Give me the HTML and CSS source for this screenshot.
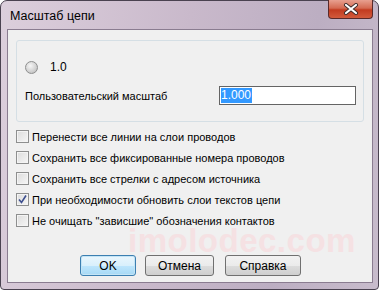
FILE: index.html
```html
<!DOCTYPE html>
<html lang="ru">

<head>
    <meta charset="UTF-8">
    <meta name="viewport" content="width=device-width, initial-scale=1.0">
    <title>Масштаб цепи</title>
    <link rel="stylesheet" href="styles.css">
</head>

<body>
    <div class="window">
        <div class="titlebar">
            <span class="title">Масштаб цепи</span>
            <span class="close">
                <svg width="16" height="12" viewBox="0 0 16 12">
                    <path d="M3 2 L13 10 M13 2 L3 10" stroke="#3a2a2a" stroke-width="4" stroke-linecap="round" />
                    <path d="M3 2 L13 10 M13 2 L3 10" stroke="#ffffff" stroke-width="2.2" stroke-linecap="round" />
                </svg>
            </span>
        </div>
        <div class="client">
            <div class="group">
                <div class="radio-row">
                    <span class="radio"></span>
                    <span>1.0</span>
                </div>
                <div class="scale-row">
                    <span>Пользовательский масштаб</span>
                    <div class="textbox"><span class="selected">1.000</span></div>
                </div>
            </div>
            <div class="options">
                <div class="option"><span class="check"></span>Перенести все линии на слои проводов</div>
                <div class="option"><span class="check"></span>Сохранить все фиксированные номера проводов</div>
                <div class="option"><span class="check"></span>Сохранить все стрелки с адресом источника</div>
                <div class="option"><span class="check checked">
                        <svg width="11" height="11" viewBox="0 0 11 11">
                            <path d="M2 5.5 L4.5 8.5 L9 1.5" fill="none" stroke="#3d4f8f" stroke-width="1.6" />
                        </svg>
                    </span>При необходимости обновить слои текстов цепи</div>
                <div class="option"><span class="check"></span>Не очищать "зависшие" обозначения контактов</div>
            </div>
            <div class="watermark">imolodec.com</div>
            <div class="buttons">
                <button class="btn default">OK</button>
                <button class="btn cancel">Отмена</button>
                <button class="btn help">Справка</button>
            </div>
        </div>
    </div>
</body>

</html>
```

FILE: styles.css
```css
body {
    margin: 0;
    padding: 0;
    background-color: #ffffff;
    font-family: "Liberation Sans", Arial, sans-serif;
    font-size: 11px;
    color: #000000;
}

.window {
    width: 379px;
    height: 290px;
    box-sizing: border-box;
    padding: 0 5px 6px 6px;
    border: 1px solid #4a4250;
    border-radius: 7px 7px 4px 4px;
    background: linear-gradient(100deg, #dccfdc 0%, #c9b9cb 45%, #bcaec2 75%, #c8bccc 100%);
    display: flex;
    flex-direction: column;
}

.titlebar {
    height: 28px;
    display: flex;
    align-items: flex-start;
}

.title {
    font-size: 12.5px;
    margin-top: 8px;
    padding-left: 3px;
    color: #000000;
}

.close {
    margin-left: auto;
    margin-top: -1px;
    width: 45px;
    height: 19px;
    box-sizing: border-box;
    border: 1px solid #5a2a2a;
    border-top: none;
    border-radius: 0 0 4px 4px;
    background: linear-gradient(#e8a090 0%, #d46a52 45%, #c23b20 55%, #d25a3c 100%);
    display: flex;
    align-items: center;
    justify-content: center;
}

.client {
    position: relative;
    flex: 1;
    border: 1px solid #8a7c90;
    background-color: #f0f0f0;
}

.group {
    margin: 10px 8px 0;
    height: 82px;
    box-sizing: border-box;
    border: 1px solid #d5dfe5;
    border-radius: 3px;
    padding: 19px 0 0 8px;
}

.radio-row {
    display: flex;
    align-items: center;
    gap: 12px;
    height: 14px;
    font-size: 12px;
}

.radio {
    width: 11px;
    height: 11px;
    border: 1px solid #8e8f8f;
    border-radius: 50%;
    background: radial-gradient(circle at 40% 35%, #f6f6f6 0%, #d0d0d0 60%, #b4b4b4 100%);
}

.scale-row {
    display: flex;
    align-items: center;
    margin-top: 12px;
    height: 19px;
}

.textbox {
    margin-left: auto;
    margin-right: 7px;
    width: 137px;
    height: 19px;
    box-sizing: border-box;
    border: 1px solid #646464;
    background-color: #ffffff;
    padding: 1px;
    font-size: 12px;
    line-height: 15px;
}

.selected {
    display: inline-block;
    background-color: #3399ff;
    color: #ffffff;
    padding-right: 1px;
}

.options {
    margin: 4px 0 0 8px;
}

.option {
    display: flex;
    align-items: center;
    height: 21px;
    gap: 3px;
}

.check {
    width: 11px;
    height: 11px;
    border: 1px solid #8e8f8f;
    background: linear-gradient(135deg, #dcdcdc 0%, #f6f6f6 100%);
    box-shadow: inset 0 0 0 1px #f4f4f4;
    display: flex;
    align-items: center;
    justify-content: center;
}

.watermark {
    position: absolute;
    left: 120px;
    top: 198px;
    font-size: 33px;
    line-height: 26px;
    font-weight: bold;
    color: #f5e1e3;
    letter-spacing: 0.5px;
}

.buttons {
    position: relative;
    display: flex;
    margin: 24px 0 0 72px;
}

.btn {
    height: 21px;
    padding: 0;
    font-family: "Liberation Sans", Arial, sans-serif;
    font-size: 12px;
    color: #000000;
    border: 1px solid #707070;
    border-radius: 3px;
    background: linear-gradient(#f2f2f2 0%, #ebebeb 50%, #dddddd 51%, #cfcfcf 100%);
}

.btn.default {
    width: 56px;
    border-color: #3c7fb1;
    background: linear-gradient(#eaf6fd 0%, #d9f0fc 50%, #bee6fd 51%, #a7d9f5 100%);
    box-shadow: inset 0 0 0 1px #c4e5f6;
}

.btn.cancel {
    width: 69px;
    margin-left: 9px;
}

.btn.help {
    width: 76px;
    margin-left: 11px;
}
```
